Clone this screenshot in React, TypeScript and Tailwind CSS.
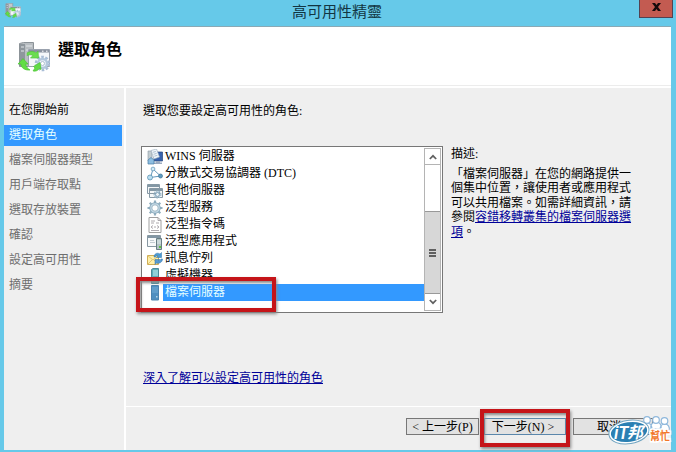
import type { ReactNode } from "react"

const steps = [
  { label: "在您開始前", state: "done" },
  { label: "選取角色", state: "current" },
  { label: "檔案伺服器類型", state: "pending" },
  { label: "用戶端存取點", state: "pending" },
  { label: "選取存放裝置", state: "pending" },
  { label: "確認", state: "pending" },
  { label: "設定高可用性", state: "pending" },
  { label: "摘要", state: "pending" },
]

const stepStyles: Record<string, string> = {
  done: "text-black",
  current: "bg-[#3399ff] text-[#e4ffff]",
  pending: "text-[#6e6e6e]",
}

function Icon({ children }: { children: ReactNode }) {
  return (
    <svg className="h-4 w-4 shrink-0" viewBox="0 0 16 16" fill="none">
      {children}
    </svg>
  )
}

function WinsIcon() {
  return (
    <Icon>
      <path d="M1 2h4v10H1z" fill="#c3cdd2" stroke="#8999a3" strokeWidth=".6" />
      <path d="M7 3h8.500v9H7z" fill="#3863ad" stroke="#28477c" strokeWidth=".7" />
      <path d="M9 12h4v1.500h2V15H6v-1.500h3z" fill="#9cabc0" />
      <path d="M4 1.500L9.500 0l3 8-5.500 2z" fill="#f1f6fa" stroke="#97aabb" strokeWidth=".6" />
      <path d="M5.800 3.300l3-.8M6.600 5.300l3-.9M7.400 7.200l3-.9" stroke="#90aac0" strokeWidth=".7" />
      <path d="M1 11l3-2.500L7 11v4H1z" fill="#8dbee1" stroke="#497da5" strokeWidth=".7" />
    </Icon>
  )
}

function DtcIcon() {
  return (
    <Icon>
      <path d="M6 3L3.500 11.500 13.500 10z" stroke="#6297bb" strokeWidth="1" />
      <circle cx="6" cy="3" r="1.900" fill="#d2ebf7" stroke="#5d90b1" strokeWidth=".7" />
      <circle cx="3" cy="11.500" r="2.500" fill="#b9def1" stroke="#4e86a9" strokeWidth=".7" />
      <circle cx="13.500" cy="10" r="2" fill="#5f9cc0" stroke="#3f7497" strokeWidth=".7" />
    </Icon>
  )
}

function OtherServerIcon() {
  return (
    <Icon>
      <path d="M.5 1.500h12v9H.5zM2.500 5.500h13v9h-13z" fill="#f5f7f8" stroke="#8799a5" />
      <path d="M1 2h11v2H1zM3 6h12v2H3z" fill="#8397a4" />
      <circle cx="10.500" cy="11.500" r="3.300" stroke="#9db9cb" strokeWidth="1.500" strokeDasharray="1.5 .8" />
      <circle cx="10.500" cy="11.500" r="2" fill="#eaf1f5" stroke="#789db6" />
    </Icon>
  )
}

function ServiceIcon() {
  return (
    <Icon>
      <path d="M8 .5v15M.5 8h15M2.700 2.700l10.600 10.600M13.300 2.700L2.700 13.300" stroke="#91aebe" strokeWidth="2.200" />
      <circle cx="8" cy="8" r="5.300" fill="#c3d9e5" stroke="#7fa1b6" strokeWidth=".8" />
      <circle cx="8" cy="8" r="3.200" fill="#fff" stroke="#8fabbb" strokeWidth=".8" />
    </Icon>
  )
}

function ScriptIcon() {
  return (
    <Icon>
      <path d="M2 .5h9l3 3v12H2z" fill="#fff" stroke="#a0a0a0" />
      <path d="M11 .5v3h3M4 4h4M4 6h3M9 6h3M6 8.500l-2 1.500 2 1.500M10 8.500l2 1.500-2 1.500M7 10h2M4 13.500h8" stroke="#99949a" strokeWidth=".8" />
    </Icon>
  )
}

function ApplicationIcon() {
  return (
    <Icon>
      <path d="M.5 1.500h13v11H.5z" fill="#f7f9fa" stroke="#8797a1" />
      <path d="M1 2h12v2H1z" fill="#8296a4" />
      <path d="M3 6.500h4M3 8.500h5" stroke="#c3ccd1" />
      <path d="M9.500 4.500h5v11h-5z" fill="#b1c1c2" stroke="#687d83" />
      <path d="M10 7h4M10 9h4" stroke="#e3eef0" />
      <path d="M12 12h2v2h-2z" fill="#62c044" />
    </Icon>
  )
}

function MessageQueueIcon() {
  return (
    <Icon>
      <path d="M.5 4.500h11v9H.5z" fill="#fff0a8" stroke="#d0ae55" />
      <path d="M1 5l5 4 5-4M1 13l4-4M11 13L7 9" stroke="#d5b76b" strokeWidth=".8" />
      <path d="M7 6c0-3 3-5 6-3l1.500-1.500v5h-5L11 5c-1-1-2 0-2.500 1z" fill="#4b9bd4" stroke="#2f71ab" strokeWidth=".5" />
      <path d="M15.500 8c0 3-3 5-6 4L8 13.500v-5h5L11.500 10c1 0 2-1 2.500-2z" fill="#579bd1" stroke="#2f71ab" strokeWidth=".5" />
    </Icon>
  )
}

function VirtualMachineIcon() {
  return (
    <Icon>
      <path d="M4.500 1.500l1.500-1h5.500v15h-7z" fill="#5daebb" stroke="#4d8a98" />
      <path d="M6 3h5M6 5h5M6 7h5" stroke="#c4f1f5" />
      <path d="M8.500 11h2v2h-2z" fill="#d8f8b5" />
    </Icon>
  )
}

function FileServerIcon() {
  return (
    <Icon>
      <path d="M4.500.5h7v14.500h-7z" fill="#4f8fc0" stroke="#4a82ae" />
      <path d="M5 3h6M5 5h6M5 7h6" stroke="#79b2da" strokeWidth=".8" />
      <path d="M9 11h1.500v1.500H9z" fill="#b3d3e3" />
    </Icon>
  )
}

const roles = [
  { name: "WINS 伺服器", icon: <WinsIcon /> },
  { name: "分散式交易協調器 (DTC)", icon: <DtcIcon /> },
  { name: "其他伺服器", icon: <OtherServerIcon /> },
  { name: "泛型服務", icon: <ServiceIcon /> },
  { name: "泛型指令碼", icon: <ScriptIcon /> },
  { name: "泛型應用程式", icon: <ApplicationIcon /> },
  { name: "訊息佇列", icon: <MessageQueueIcon /> },
  { name: "虛擬機器", icon: <VirtualMachineIcon /> },
  { name: "檔案伺服器", icon: <FileServerIcon />, selected: true },
]

function WizardIcon({ className }: { className: string }) {
  return (
    <svg className={className} viewBox="0 0 32 32" fill="none">
      <path d="M1.500 1.500l4-1h10v24h-14z" fill="#b9bec2" stroke="#8c9398" />
      <path d="M2 2h5v22H2z" fill="#8f979d" />
      <path d="M8 4h6M8 8h6M8 12h6M3 5h3M3 9h3" stroke="#e3e7ea" />
      <path d="M10.500 7.500h21v17h-21z" fill="#f5f7fa" stroke="#9aa2ae" />
      <path d="M11 8h20v2.500H11z" fill="#8b93a0" />
      <path d="M24 9.200h1.500M28 9.200h1.500" stroke="#fff" />
      <circle cx="24.500" cy="21.500" r="6.500" stroke="#a9bdd6" strokeWidth="2.600" strokeDasharray="2.6 1.484" />
      <circle cx="24.500" cy="21.500" r="4.500" fill="#edf4f9" stroke="#b3c7dc" strokeWidth="2.400" />
      <circle cx="24.500" cy="21.500" r="2" fill="#fff" stroke="#9fb3c8" strokeWidth=".8" />
      <path d="M9 11c3-2 7-2 9 0l2-2 .5 7h-8l2.500-2.500c-2-1-4-1-6 0z" fill="#6cdd50" stroke="#53c63a" strokeWidth=".7" />
      <path d="M5 16.500l5 5.500H7.500c.5 3 2 4 4.500 6-5 .5-9-2-9-6H0z" fill="#61dd45" stroke="#4cc633" strokeWidth=".7" />
      <path d="M15.500 24.500l6.500-4 1 7-2-1c-1 2-3 3-6 2.500l2-3z" fill="#62da47" stroke="#4cc633" strokeWidth=".7" />
    </svg>
  )
}

function Chevron({ up = false }: { up?: boolean }) {
  return (
    <svg className="h-2 w-2" viewBox="0 0 8 8" fill="none">
      <path d={up ? "M.8 6L4 2.800 7.200 6" : "M.8 2L4 5.200 7.200 2"} stroke="#606060" strokeWidth="1.700" />
    </svg>
  )
}

function Watermark() {
  return (
    <svg className="absolute top-[414px] left-[607px] h-[34px] w-[66px]" viewBox="0 0 66 34">
      <g fill="#fff" stroke="#8fb8dc" strokeWidth="1.200">
        <path d="M36 16c-2-4 1-7 4-7s5 2 5 7zM53 16c0-4 2-6 5-6s5 3 4 6zM44 15c-1-5 2-7 5-7s6 2 5 7z" />
        <circle cx="40" cy="6" r="3.300" />
        <circle cx="57.500" cy="7" r="3.300" />
        <circle cx="49" cy="6" r="3.300" />
      </g>
      <ellipse cx="22" cy="18" rx="20" ry="11.500" transform="rotate(-9 22 18)" fill="#287eaf" stroke="#72a5c1" strokeWidth="1.500" />
      <ellipse cx="22" cy="18" rx="19" ry="10.500" transform="rotate(-9 22 18)" fill="#2b80b3" stroke="#fff" strokeWidth="1.500" />
      <g fontFamily="'Liberation Sans', 'Noto Sans CJK TC', sans-serif" fontWeight="bold">
        <text x="7" y="25" fontSize="18" fill="white" fontStyle="italic" textLength="14" lengthAdjust="spacingAndGlyphs">iT</text>
        <text x="20" y="24" fontSize="16" fill="white" fontStyle="italic">邦</text>
        <text x="43" y="26" fontSize="11" fill="#f2772b" stroke="white" strokeWidth="3" paintOrder="stroke" textLength="20" lengthAdjust="spacingAndGlyphs">幫忙</text>
      </g>
    </svg>
  )
}

export default function App() {
  return (
    <div className="relative flex h-[452px] w-[676px] flex-col overflow-hidden bg-[#66c9e9] font-['Liberation_Serif','Noto_Sans_CJK_TC',serif] text-xs text-black">
      {/* Title bar */}
      <header className="flex h-[26px] shrink-0 items-start pl-[5px]">
        <WizardIcon className="mt-[3px] h-4 w-4" />
        <h1 className="flex-1 pl-[14px] text-center text-[15px] leading-6 text-[#123542]">高可用性精靈</h1>
        <button className="mr-[3px] flex h-[18px] w-[34px] items-center justify-center border border-t-0 border-[#534252] bg-[#c35b51]" aria-label="關閉">
          <svg className="-mt-1 h-2 w-[9px]" viewBox="0 0 9 8">
            <path d="M0 0h3l1.500 2L6 0h3L6 4l3 4H6L4.500 6 3 8H0l3-4z" fill="#160b0b" />
          </svg>
        </button>
      </header>

      <main className="mr-[5px] ml-1 flex h-[424px] flex-col border-t border-[#8aa9b5] bg-[#efefef]">
        <div className="flex h-[61px] shrink-0 border-b-2 border-white bg-white">
          <div className="flex flex-1 items-start border-b border-[#ececec] pl-[14px]">
            <WizardIcon className="mt-[15px] h-8 w-8" />
            <h2 className="mt-[11px] ml-2 text-base leading-6 font-bold">選取角色</h2>
          </div>
        </div>

        <div className="flex min-h-0 flex-1">
          {/* Wizard steps */}
          <nav className="flex w-[122px] shrink-0 flex-col gap-1 border-r-2 border-white pt-3">
            {steps.map(step => (
              <div key={step.label} className={`mr-0.5 h-[21px] pl-[5px] leading-5 ${stepStyles[step.state]}`}>
                {step.label}
              </div>
            ))}
          </nav>

          <div className="flex min-w-0 flex-1 flex-col">
            <section className="h-[319px] border-b border-white pt-[14px] pl-[15px]">
              <p className="pl-0.5 leading-[18px]">選取您要設定高可用性的角色:</p>
              <div className="mt-[26px] flex">
                <div className="flex h-[167px] w-[302px] border border-[#777] bg-white p-px">
                  <ul className="w-[281px] pl-1">
                    {roles.map(role => (
                      <li key={role.name} className="flex h-[17px] items-center">
                        {role.icon}
                        <span className={`h-[17px] flex-1 pl-[2px] leading-[17px] whitespace-nowrap ${role.selected ? "bg-[#3399ff] text-[#e4ffff]" : ""}`}>
                          {role.name}
                        </span>
                      </li>
                    ))}
                  </ul>
                  <div className="flex w-[17px] flex-col border border-[#b4b4b4] bg-white">
                    <div className="flex h-4 items-center justify-center border-b border-[#b4b4b4]"><Chevron up /></div>
                    <div className="h-[46px]" />
                    <div className="flex h-[83px] flex-col items-center justify-center gap-px border-y border-[#999] bg-[#d7d7d7]">
                      <span className="h-0.5 w-[7px] bg-[#606060]" />
                      <span className="h-0.5 w-[7px] bg-[#606060]" />
                      <span className="h-0.5 w-[7px] bg-[#606060]" />
                    </div>
                    <div className="flex flex-1 items-center justify-center"><Chevron /></div>
                  </div>
                </div>

                <aside className="pl-2">
                  <h3 className="leading-4">描述:</h3>
                  <p className="mt-[5px] leading-[14.4px] whitespace-nowrap">
                    「檔案伺服器」在您的網路提供一<br />
                    個集中位置，讓使用者或應用程式<br />
                    可以共用檔案。如需詳細資訊，請<br />
                    參閱<a className="text-[#000099] underline">容錯移轉叢集的檔案伺服器選<br />項</a>。
                  </p>
                </aside>
              </div>
              <a className="mt-[56px] ml-0.5 inline-block leading-[18px] text-[#000099] underline">深入了解可以設定高可用性的角色</a>
            </section>

            <footer className="flex pt-[11px] pl-[280px]">
              <button className="h-[17px] w-[73px] border border-[#777] bg-[#e2e2e2] leading-[16px] whitespace-nowrap">&lt; 上一步(P)</button>
              <button className="ml-[5px] h-[17px] w-[82px] border border-[#5b87ab] bg-[#e2e2e2] pr-1 leading-[16px] whitespace-nowrap">下一步(N) &gt;</button>
              <button className="ml-[7px] h-[17px] w-[80px] border border-[#777] bg-[#e2e2e2] pr-2 leading-[16px]">取消</button>
            </footer>
          </div>
        </div>
      </main>

      {/* Highlight boxes */}
      <div className="absolute top-[277px] left-[136px] h-[35px] w-[140px] border-4 border-[#c51419] shadow-[1px_2px_3px_#888,inset_1px_2px_3px_#888]" />
      <div className="absolute top-[409px] left-[480px] h-[38px] w-[90px] border-4 border-[#c51419] shadow-[1px_2px_3px_#888,inset_1px_2px_3px_#888]" />
      <Watermark />
    </div>
  )
}
